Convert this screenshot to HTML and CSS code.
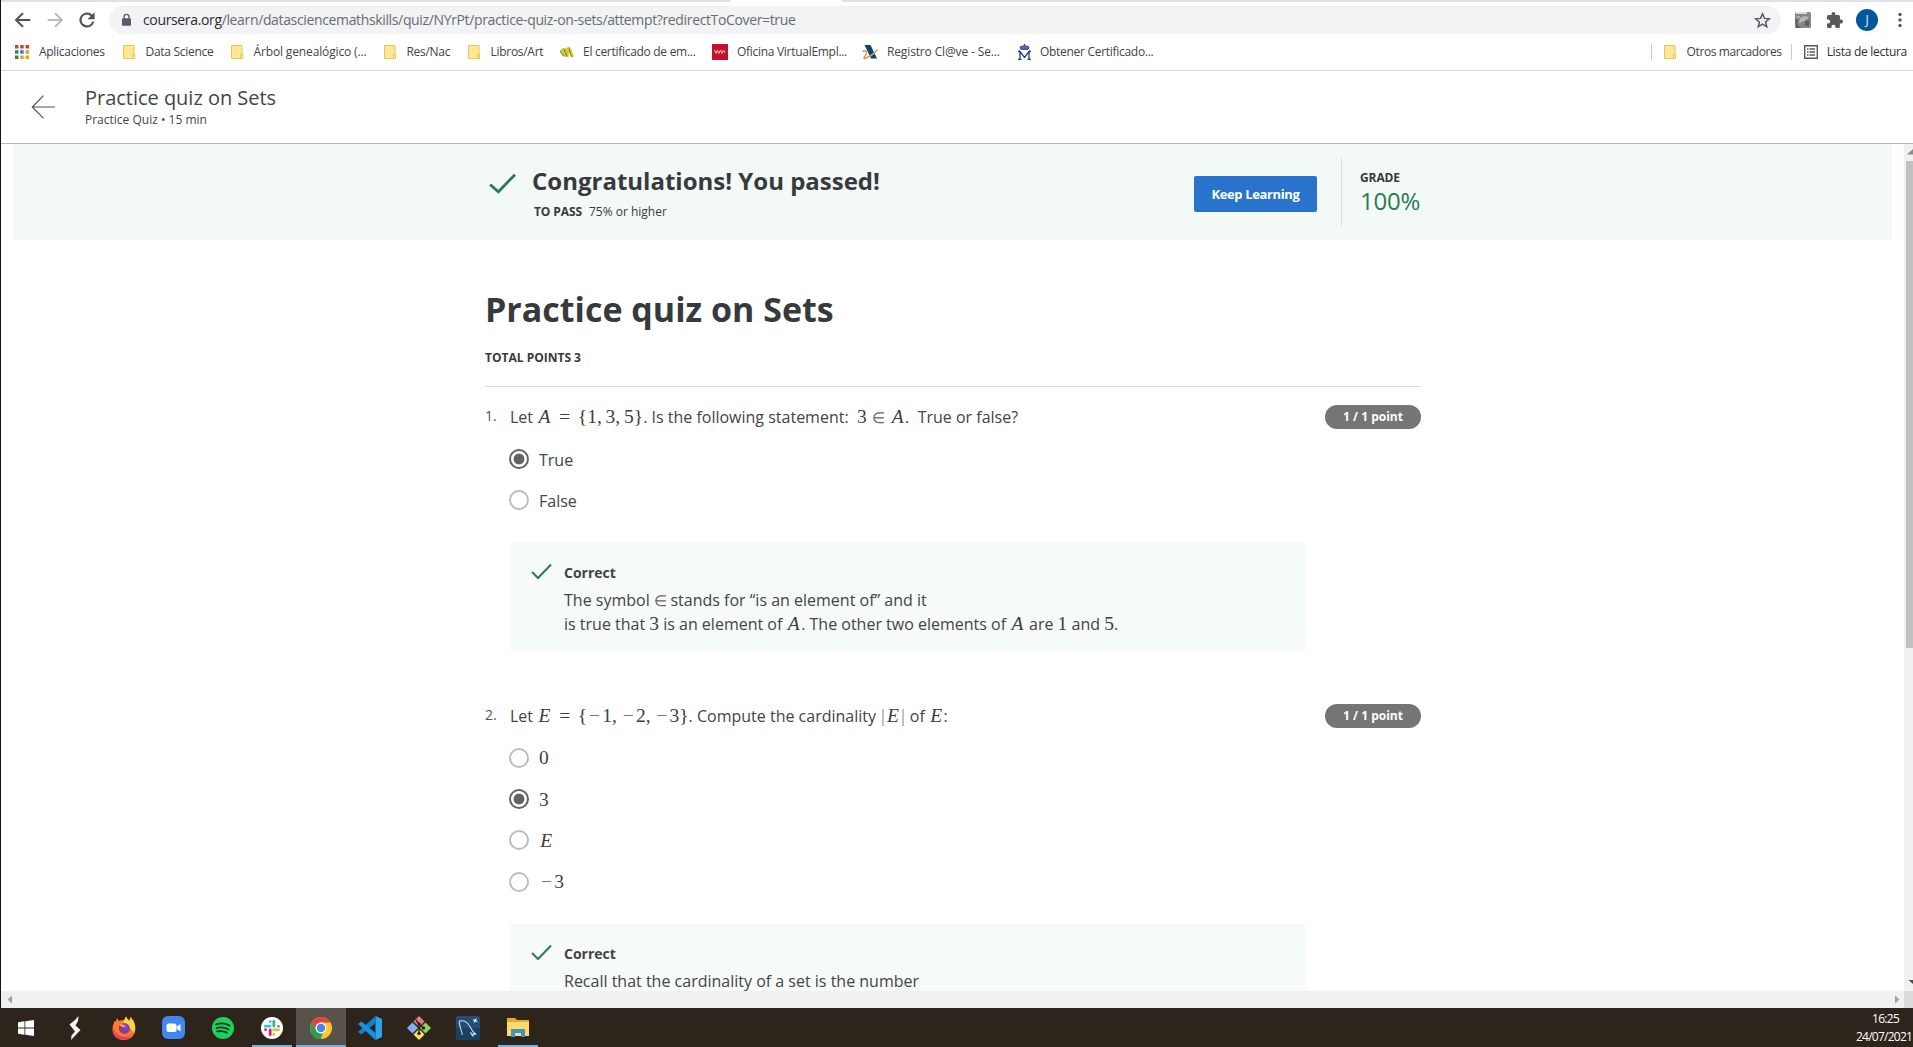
FILE: index.html
```html
<!DOCTYPE html>
<html lang="es">
<head>
<meta charset="utf-8">
<title>Practice quiz on Sets</title>
<link rel="stylesheet" href="styles.css">
</head>
<body>
<div class="screen">
<div class="browser">
  <div class="tabstrip"><span class="tab-active"></span></div>

  <div class="toolbar">
    <svg class="nav" viewBox="0 0 24 24"><path d="M20 12H5M12 4.500L4.500 12l7.500 7.500" fill="none" stroke="#4d5054" stroke-width="2.300"/></svg>
    <svg class="nav" viewBox="0 0 24 24"><path d="M4 12h15M12 4.500l7.500 7.500-7.500 7.500" fill="none" stroke="#b9bbbe" stroke-width="2.300"/></svg>
    <svg class="nav" viewBox="0 0 24 24"><path d="M17.650 6.350A8 8 0 1 0 19.730 14h-2.080A6 6 0 1 1 12 6c1.660 0 3.140.690 4.220 1.780L13 11h7V4z" fill="#4d5054" stroke="#4d5054" stroke-width=".5"/></svg>
    <div class="omnibox">
      <svg class="lock" viewBox="0 0 10 14"><rect x="0" y="5" width="10" height="8.500" rx="1" fill="#5a5d61"/><path d="M2.300 5.500V3.500a2.700 2.700 0 0 1 5.400 0v2" fill="none" stroke="#5a5d61" stroke-width="1.500"/></svg>
      <span class="url"><b class="host">coursera.org</b>/learn/datasciencemathskills/quiz/NYrPt/practice-quiz-on-sets/attempt?redirectToCover=true</span>
      <svg class="star" viewBox="0 0 16 16"><path d="M8 1.700l1.800 4.300 4.700.400-3.600 3 1.100 4.500-4-2.400-4 2.400 1.100-4.500-3.600-3 4.700-.400z" fill="none" stroke="#55585c" stroke-width="1.400"/></svg>
    </div>
    <svg class="ext" viewBox="0 0 16 16"><rect width="16" height="16" rx="1.500" fill="#85878a"/><path d="M1 0h11v2H1z" fill="#d9dadb"/><path d="M1 4h4v2H1zM2 10h4v1H2z" fill="#aaa"/><path d="M5 6l4-2 5 1-3 3-1 5-2-4-4 2z" fill="#b7b8ba"/><path d="M0 6l4 3-2 3 4 4H1zM9 9l5-1v6h-4z" fill="#606164"/></svg>
    <svg class="puzzle" viewBox="2 1 21 21"><path d="M20.500 11H19V7a2 2 0 0 0-2-2h-4V3.500a2.500 2.500 0 0 0-5 0V5H4a2 2 0 0 0-2 2v3.800h1.500a2.700 2.700 0 0 1 0 5.400H2V20a2 2 0 0 0 2 2h3.800v-1.500a2.700 2.700 0 0 1 5.400 0V22H17a2 2 0 0 0 2-2v-4h1.500a2.500 2.500 0 0 0 0-5z" fill="#56595d"/></svg>
    <span class="avatar">J</span>
    <svg class="dots" viewBox="0 0 4 16"><circle cx="2" cy="2.500" r="1.700"/><circle cx="2" cy="8" r="1.700"/><circle cx="2" cy="13.500" r="1.700"/></svg>
  </div>

  <div class="bookmarks">
    <div class="bm first"><svg class="i14" viewBox="0 0 14 14"><path d="M0 0h3.500v3.500H0zM5.200 0h3.500v3.500H5.200zM10.500 0H14v3.500h-3.500z" fill="#c8403a"/><path d="M0 5.200h3.500v3.500H0z" fill="#2d8a52"/><path d="M5.200 5.200h3.500v3.500H5.200z" fill="#3b72d0"/><path d="M10.500 5.200H14v3.500h-3.500zM5.200 10.500h3.500V14H5.200zM10.500 10.500H14V14h-3.500z" fill="#d9a62a"/><path d="M0 10.500h3.500V14H0z" fill="#2d8a52"/></svg><span>Aplicaciones</span></div>
    <div class="bm folder"><svg viewBox="0 0 12 14"><path d="M.5.500h10.500v13H.5z" fill="#ffe793" stroke="#e8c84f"/><path d="M9.500 9.500h2v4h-2z" fill="#fff0a8" stroke="#e3bd3c" stroke-width=".8"/></svg><span>Data Science</span></div>
    <div class="bm folder wide"><svg viewBox="0 0 12 14"><path d="M.5.500h10.500v13H.5z" fill="#ffe793" stroke="#e8c84f"/><path d="M9.500 9.500h2v4h-2z" fill="#fff0a8" stroke="#e3bd3c" stroke-width=".8"/></svg><span>Árbol genealógico (...</span></div>
    <div class="bm folder"><svg viewBox="0 0 12 14"><path d="M.5.500h10.500v13H.5z" fill="#ffe793" stroke="#e8c84f"/><path d="M9.500 9.500h2v4h-2z" fill="#fff0a8" stroke="#e3bd3c" stroke-width=".8"/></svg><span>Res/Nac</span></div>
    <div class="bm folder"><svg viewBox="0 0 12 14"><path d="M.5.500h10.500v13H.5z" fill="#ffe793" stroke="#e8c84f"/><path d="M9.500 9.500h2v4h-2z" fill="#fff0a8" stroke="#e3bd3c" stroke-width=".8"/></svg><span>Libros/Art</span></div>
    <div class="bm"><svg class="i14" viewBox="0 0 14 14"><path d="M0 5.500L3 3l3 .500L8.500 1.500l2 1L14 12l-2.500.500L9 7l-.500 5.500-3-1L2 9z" fill="#cfcb35"/><path d="M0 5.500l2 4 3 2M4 4l3 7.500M9 3.500l2.500 8.500" fill="none" stroke="#67692b" stroke-width=".8"/></svg><span>El certificado de em...</span></div>
    <div class="bm"><svg class="i16" viewBox="0 0 16 16"><path d="M0 0h16v16H0z" fill="#c3102c"/><path d="M2.500 6l1.500 3.500L5.500 6 7 9.500 8.500 6 10 9.500 11.500 6 13 9" fill="none" stroke="#f5b6bf" stroke-width="1"/></svg><span>Oficina VirtualEmpl...</span></div>
    <div class="bm wide"><svg class="i16" viewBox="0 0 16 16"><path d="M2.500 1h6L15 14.500H9z" fill="#0d4478"/><path d="M.5 7.500c4-2 5 1 3 4l-2 3M15.500 5.500c-2 3-3 4-6.500 6-3 1.500-4 2-6.500 3.500" fill="none" stroke="#d99e55" stroke-width="1.500"/></svg><span>Registro Cl@ve - Se...</span></div>
    <div class="bm"><svg class="crown" viewBox="0 0 13 16"><path d="M6.500 0v2M5.500 1h2" stroke="#213c82"/><path d="M2 4C2 1.800 5 1.600 6.500 2.800 8 1.600 11 1.800 11 4L10 5.300H3z" fill="#5c70a8" stroke="#213c82"/><path d="M2 15V7.500l4.500 6 4.500-6V15M0 7.500h2.500M10.500 7.500H13M0 15.300h3.500M9.500 15.300H13" fill="none" stroke="#213c82" stroke-width="1.300"/></svg><span>Obtener Certificado...</span></div>
    <div class="bm-right">
      <i class="sep"></i>
      <div class="bm folder"><svg viewBox="0 0 12 14"><path d="M.5.500h10.500v13H.5z" fill="#ffe793" stroke="#e8c84f"/><path d="M9.500 9.500h2v4h-2z" fill="#fff0a8" stroke="#e3bd3c" stroke-width=".8"/></svg><span class="tight">Otros marcadores</span></div>
      <i class="sep"></i>
      <div class="bm reading"><svg class="i14" viewBox="0 0 14 14"><path d="M.7.700h12.600v12.600H.7z" fill="#fff" stroke="#55585c" stroke-width="1.400"/><path d="M3 4h1.500M3 7h1.500M3 10h1.500M5.500 4H11M5.500 7H11M5.500 10H11" stroke="#55585c" stroke-width="1.300"/></svg><span>Lista de lectura</span></div>
    </div>
  </div>

  <header class="page-head">
    <svg class="back" viewBox="0 0 24 24"><path d="M23.500 12H.8M12 .700L.8 12 12 23.300" fill="none" stroke="#525252" stroke-width="1.200"/></svg>
    <div>
      <div class="head-title">Practice quiz on Sets</div>
      <div class="head-sub">Practice Quiz • 15 min</div>
    </div>
  </header>

  <div class="viewport">
    <main class="page">
      <section class="banner">
        <div class="column banner-row">
          <svg class="tick-lg" viewBox="0 0 26 20"><path d="M1 11l8 7L25 1.500" fill="none" stroke="#2a7b58" stroke-width="2.700"/></svg>
          <div class="passed">
            <h2>Congratulations! You passed!</h2>
            <p><b>TO PASS</b>75% or higher</p>
          </div>
          <button class="keep">Keep Learning</button>
          <div class="grade"><b>GRADE</b><span>100%</span></div>
        </div>
      </section>

      <div class="column body">
        <h1>Practice quiz on Sets</h1>
        <div class="total">TOTAL POINTS 3</div>

        <section class="question">
          <span class="num">1.</span>
          <div class="q">
            <div class="prompt">Let <span class="math"><i class="va">A</i><s>=</s>{1<u>,</u>3<u>,</u>5}</span>. Is the following statement: &nbsp;<span class="math">3<s class="in">∈</s><i class="va">A</i></span>. &nbsp;True or false?</div>
            <div class="options">
              <label><span class="radio on"></span>True</label>
              <label><span class="radio"></span>False</label>
            </div>
            <div class="feedback">
              <svg class="tick" viewBox="0 0 21 16"><path d="M1 8.500l6 6L20 1" fill="none" stroke="#2a7b58" stroke-width="2"/></svg>
              <div>
                <h3>Correct</h3>
                <p>The symbol <span class="math in-only">∈</span> stands for “is an element of” and it<br>is true that <span class="math">3</span> is an element of <span class="math"><i class="va">A</i></span>. The other two elements of <span class="math"><i class="va">A</i></span> are <span class="math">1</span> and <span class="math">5</span>.</p>
              </div>
            </div>
          </div>
          <span class="pill">1 / 1 point</span>
        </section>

        <section class="question">
          <span class="num">2.</span>
          <div class="q">
            <div class="prompt">Let <span class="math"><i class="va">E</i><s>=</s>{<em>−</em>1<u>,</u><em>−</em>2<u>,</u><em>−</em>3}</span>. Compute the cardinality <span class="math"><q>|</q><i class="va">E</i><q>|</q></span> of <span class="math"><i class="va">E</i></span>:</div>
            <div class="options">
              <label><span class="radio"></span><span class="math">0</span></label>
              <label><span class="radio on"></span><span class="math">3</span></label>
              <label><span class="radio"></span><span class="math"><i class="va">E</i></span></label>
              <label><span class="radio"></span><span class="math"><em>−</em>3</span></label>
            </div>
            <div class="feedback">
              <svg class="tick" viewBox="0 0 21 16"><path d="M1 8.500l6 6L20 1" fill="none" stroke="#2a7b58" stroke-width="2"/></svg>
              <div>
                <h3>Correct</h3>
                <p>Recall that the cardinality of a set is the number</p>
              </div>
            </div>
          </div>
          <span class="pill">1 / 1 point</span>
        </section>
      </div>
    </main>
    <div class="vscroll">
      <svg viewBox="0 0 9 17"><path d="M3 10.500L9 5v5.500z" fill="#8d8d8d"/></svg>
      <i class="thumb"></i>
      <svg viewBox="0 0 9 17"><path d="M4.500 6H9v4z" fill="#4a4a4a"/></svg>
    </div>
  </div>
  <div class="hscroll">
    <svg viewBox="0 0 10 17"><path d="M1.500 8.500L6 4.500v8z" fill="#a0a0a0"/></svg>
    <svg viewBox="0 0 10 17"><path d="M5.500 8.500L1 4.500v8z" fill="#a0a0a0"/></svg>
    <i class="corner"></i>
  </div>
</div>

<footer class="taskbar">
  <div class="apps">
    <div class="app"><svg width="16" height="16" viewBox="0 0 16 16"><path d="M0 2.200l6.500-.9v6.200H0zM7.300 1.200L16 0v7.500H7.300zM0 8.400h6.500v6.300L0 13.800zM7.300 8.400H16V16l-8.700-1.200z" fill="#fff"/></svg></div>
    <div class="app"><svg width="12" height="24" viewBox="0 0 12 24"><path d="M9.500 0L9 5 6.500 9.500l5 4.500L2 24l.5-4.500L6 15.500.5 8.500 6 4z" fill="#f4f4f4"/></svg></div>
    <div class="app"><svg width="24" height="24" viewBox="0 0 24 24"><path d="M5 2l2 3c2-1 4-1 5-1l2-3.500 2 3 1.500.500L18.500 1l3 4c3 6 2.500 12-1.500 16-5 4-12 4-16.500 0C-.5 17 0 11 2 7V5l1.500 1z" fill="#fc7a2c"/><path d="M14 .5l2 3.500 2 1 .500-4 3 4c2 4 2.300 8 .5 12l-6-7-5-3z" fill="#fed33f"/><path d="M1 11c1 7 7 10 12 10 4 0 7-2 8-5-2 6-7 7.500-10 7.500C5 23.500 0 18 1 11z" fill="#ef3662"/><circle cx="12.500" cy="12.500" r="5.400" fill="#7547c0"/><path d="M7 9l4 .500 3 .500c-1 2-3 1.500-3 3 0 2 4 3 6 1-2 4-8 4-10 0z" fill="#a02f8c"/><path d="M7 9l2-1 5 2-2.500 1.500z" fill="#ffb13b"/></svg></div>
    <div class="app"><svg width="23" height="23" viewBox="0 0 23 23"><rect width="23" height="23" rx="6" fill="#4187f2"/><rect x="4.500" y="7.500" width="10" height="8.500" rx="2" fill="#fff"/><path d="M15 10.500l3.500-2.500v7.500L15 13z" fill="#fff"/></svg></div>
    <div class="app"><svg width="22" height="22" viewBox="0 0 22 22"><circle cx="11" cy="11" r="11" fill="#1ed15f"/><path d="M4 7.300c4.500-1.300 9.500-1 13.500 1.200M4.600 11c4-1 8-.700 11.800 1.300M5.200 14.400c3.500-.700 6.500-.500 9.700 1.200" fill="none" stroke="#12351f" stroke-width="1.800" stroke-linecap="round"/></svg></div>
    <div class="app run"><svg width="22" height="22" viewBox="0 0 22 22"><circle cx="11" cy="11" r="11" fill="#fff"/><g fill="none" stroke-width="2.700" stroke-linecap="round"><path d="M4.300 9.200h4.800M9.300 4.500v.1" stroke="#36c5f0"/><path d="M12.800 4.300v4.800M17.500 9.300h-.1" stroke="#2eb67d"/><path d="M17.600 12.800h-4.800M12.700 17.500v-.1" stroke="#ecb22e"/><path d="M9.200 17.700v-4.900M4.500 12.700h.1" stroke="#e01e5a"/></g></svg></div>
    <div class="app run active"><svg width="22" height="22" viewBox="0 0 22 22"><circle cx="11" cy="11" r="11" fill="#fbc72f"/><path d="M1.470 5.500A11 11 0 0 1 20.530 5.500H11a5.500 5.500 0 0 0-4.760 8.250z" fill="#e0443a"/><path d="M1.470 5.500l4.770 8.250A5.500 5.500 0 0 0 12.700 16.200L10.800 22A11 11 0 0 1 1.470 5.500z" fill="#2b9d55"/><circle cx="11" cy="11" r="5.400" fill="#fff"/><circle cx="11" cy="11" r="4.200" fill="#4286ee"/></svg></div>
    <div class="app"><svg width="24" height="24" viewBox="0 0 24 24"><path d="M17.500 0L24 3v18l-6.500 3z" fill="#2ba4ee"/><path d="M17.500 0v7L3.500 18.500 0 16z" fill="#1180cd"/><path d="M17.500 24v-7L3.500 5.500 0 8z" fill="#1a92dc"/></svg></div>
    <div class="app"><svg width="24" height="24" viewBox="0 0 24 24"><path d="M12 0l5.500 5.500L12 11 6.500 5.500z" fill="#ee7b7b"/><path d="M5.500 6.500L11 12l-5.500 5.500L0 12z" fill="#84aef0"/><path d="M18.500 6.500L24 12l-5.500 5.500L13 12z" fill="#8ed163"/><path d="M12 13l5.500 5.500L12 24l-5.500-5.500z" fill="#fbe066"/><path d="M9 4l3 4v10M12 8l4 4" fill="none" stroke="#2e2a22" stroke-width="1.500"/><circle cx="12" cy="8" r="1.700" fill="#2e2a22"/><circle cx="16.500" cy="12" r="1.700" fill="#2e2a22"/><circle cx="12" cy="17.500" r="1.700" fill="#2e2a22"/></svg></div>
    <div class="app"><svg width="24" height="24" viewBox="0 0 24 24"><rect width="24" height="24" rx="2" fill="#244f75"/><path d="M0 12h24v10a2 2 0 0 1-2 2H2a2 2 0 0 1-2-2z" fill="#1c4062"/><path d="M6 19c.5-3-1-4-1.500-7C4 9 2.500 7 3.500 5c4-1 7.500 1 9.500 4 2 2.500 2 6 7 9.500l-3-.500v2c-1.500-1-2-2.500-2.500-4" fill="none" stroke="#c8dbea" stroke-width="1.100"/><path d="M16.500 3l2 .8L20.500 2l-.2 2.500 1.700 1.700-2.500-.6-1.800 1.400.3-2z" fill="#e8f0f6"/></svg></div>
    <div class="app run"><svg width="22" height="19" viewBox="0 0 22 19"><path d="M0 0h8l2 2h12v16H0z" fill="#e5ad2c"/><path d="M0 4h22v14H0z" fill="#ffd968"/><path d="M4 19v-8h14v8h-4v-4H8v4z" fill="#3f93c6"/></svg></div>
  </div>
  <div class="clock"><span>16:25</span><span class="date">24/07/2021</span></div>
</footer>
</div>
</body>
</html>
```
FILE: styles.css
```css
* { box-sizing: border-box; }
body { margin: 0; overflow: hidden; font-family: "Open Sans", sans-serif; color: #373a3c; background: #fff; }
h1, h2, h3, p { margin: 0; }
svg { display: block; flex: none; }
.screen { width: 1913px; height: 1047px; display: flex; flex-direction: column; overflow: hidden; }
.browser { flex: 1; min-height: 0; display: flex; flex-direction: column; border-left: 1px solid #17130f; }

/* browser chrome */
.tabstrip { height: 2px; background: #dee1e6; padding-left: 729px; }
.tab-active { display: block; width: 112px; height: 2px; background: #fff; }
.toolbar { height: 36px; display: flex; align-items: center; padding-left: 11px; }
.nav { width: 22px; height: 22px; margin-right: 10px; }
.omnibox { width: 1672px; height: 28px; margin-left: 1px; border-radius: 14px; background: #f1f3f4; display: flex; align-items: center; padding: 0 10px 0 13px; }
.lock { width: 9px; height: 14px; margin-right: 12px; }
.url { flex: 1; font-size: 14px; line-height: 28px; letter-spacing: -0.355px; color: #696c70; white-space: nowrap; }
.host { font-weight: 400; color: #2c2e31; }
.star { width: 17px; height: 17px; }
.ext { width: 16px; height: 16px; margin-left: 14px; }
.puzzle { width: 16px; height: 16px; margin-left: 16px; }
.avatar { width: 22px; height: 22px; margin-left: 13px; border-radius: 50%; background: #01579b; color: #e8f1f8; font-size: 12px; line-height: 22px; text-align: center; }
.dots { width: 4px; height: 16px; margin-left: 20px; fill: #55585c; }

.bookmarks { height: 33px; border-bottom: 1px solid #d5d7da; display: grid; grid-template-columns: 108px 108px 153px 84px 92px 152px 150px 156px 1fr auto; padding: 0 6px 4px 14px; align-items: center; }
.bm { display: flex; align-items: center; font-size: 12px; line-height: 20px; letter-spacing: -0.29px; white-space: nowrap; color: #414347; }
.bm.wide { letter-spacing: -0.14px; }
.bm svg { margin-right: 9px; }
.bm.first svg { margin-right: 10px; }
.bm .tight { letter-spacing: -0.41px; }
.folder svg { width: 12px; height: 14px; margin-right: 10.500px; }
.i14 { width: 14px; height: 14px; }
.i16 { width: 16px; height: 16px; }
.crown { width: 13px; height: 16px; }
.bm-right { display: flex; align-items: center; }
.sep { width: 1px; height: 16px; background: #cacccf; margin-right: 12px; }
.bm + .sep { margin-left: 9px; }
.reading { color: #2b2d30; }

/* quiz header */
.page-head { height: 73px; border-bottom: 1px solid #b8b8b8; display: flex; align-items: center; padding: 0 0 0 30px; }
.back { width: 25px; height: 24px; margin-right: 29px; }
.head-title { font-size: 20px; line-height: 26px; color: #454545; letter-spacing: -0.02px; }
.head-sub { font-size: 12px; line-height: 18px; color: #454545; }

.viewport { flex: 1; min-height: 0; display: flex; overflow: hidden; }
.page { flex: 1; overflow: hidden; padding: 0 12px; }
.column { width: 936px; margin-left: 472px; }
.banner { height: 96px; background: #f3f9f7; }
.banner-row { display: flex; }
.tick-lg { width: 27px; height: 21px; margin: 29px 16px 0 4px; }
.passed { flex: 1; }
.passed h2 { font-size: 24px; line-height: 32px; margin-top: 21px; letter-spacing: 0; }
.passed p { font-size: 12px; line-height: 18px; margin: 6px 0 0 2px; }
.passed b { margin-right: 7px; letter-spacing: -0.1px; }
.keep { width: 123px; height: 36px; margin: 32px 24px 0 0; padding: 0; border: 0; border-radius: 2px; background: #2a73cc; color: #fff; font: bold 13px/36px "Open Sans", sans-serif; letter-spacing: -0.36px; }
.grade { height: 68px; width: 80px; margin-top: 14px; padding: 11px 0 0 18px; border-left: 1px solid #d8dedc; }
.grade b { display: block; font-size: 12px; line-height: 18px; letter-spacing: -0.1px; }
.grade span { display: block; font-size: 24px; line-height: 27px; color: #2a7b50; letter-spacing: -0.2px; }

.body { padding-top: 46px; }
h1 { font-size: 34px; line-height: 46px; letter-spacing: 0; color: #373a3c; }
.total { font-size: 12px; font-weight: bold; line-height: 18px; margin-top: 17px; padding-bottom: 19px; border-bottom: 1px solid #dcdcdc; }
.question { display: grid; grid-template-columns: 25px 815px 96px; margin-bottom: 52px; }
.total + .question { margin-top: 17px; }
.num { font-size: 14px; line-height: 24px; color: #525252; }
.q { font-size: 16px; color: #424446; }
.prompt { line-height: 26px; white-space: pre; }
.pill { height: 24px; margin-top: 1px; border-radius: 12px; background: #757575; color: #fff; font-size: 12px; font-weight: bold; line-height: 24px; text-align: center; }
.options { display: grid; grid-auto-rows: 41.300px; margin: 9px 0 0 -1px; }
.options label { display: flex; align-items: center; gap: 10px; line-height: 26px; }
.radio { width: 20px; height: 20px; margin-top: -1px; border: 2px solid #bdbdbd; border-radius: 50%; background: #fff; }
.radio.on { border-color: #636363; background: radial-gradient(circle, #636363 5px, #fff 5.800px); }
.feedback { width: 795px; margin-top: 21px; padding: 17px 0 15px 21px; background: #f6fbf9; display: flex; }
.tick { width: 21px; height: 17px; margin: 3px 12px 0 0; }
.feedback h3 { font-size: 14px; line-height: 26px; }
.feedback p { line-height: 24px; margin-top: 2px; white-space: nowrap; }

/* formulas: boxes follow TeX advance widths */
.math { font-family: "Liberation Serif", serif; font-size: 19.500px; line-height: 0; white-space: nowrap; color: #3c3e40; }
.math i, .math s, .math em, .math u, .math q { display: inline-block; line-height: 0; text-decoration: none; text-align: center; font-style: normal; quotes: none; }
.math q::before, .math q::after { content: none; }
.math .va { width: .75em; font-style: italic; }
.math s { width: .778em; margin: 0 .278em; }
.math s.in { font-size: 15px; width: 13px; margin: 0 5.400px; color: #666; }
.math em { width: .778em; color: #777; }
.math u { width: .445em; text-align: left; }
.math q { width: .278em; color: #888; }
.math.in-only { display: inline-block; width: 12.500px; font-size: 15px; text-align: center; color: #666; }

/* scrollbars */
.vscroll { width: 9px; background: #f0f0f0; display: flex; flex-direction: column; }
.vscroll svg { width: 9px; height: 17px; }
.thumb { height: 487px; margin: 0 0 auto 2px; background: #c1c1c1; }
.hscroll { height: 17px; background: #f0f0f0; display: flex; padding-left: 5px; }
.hscroll svg { width: 10px; height: 17px; margin-right: auto; }
.hscroll svg + svg { margin-right: 0; }
.corner { width: 9px; background: #dcdcdc; }

/* taskbar */
.taskbar { height: 39px; background: #2d251c; display: flex; justify-content: space-between; }
.apps { display: grid; grid-template-columns: repeat(11, 49.200px); padding-left: 1.200px; }
.app { display: flex; align-items: center; justify-content: center; }
.run { background: linear-gradient(#76b3e2, #76b3e2) center bottom / 40px 2px no-repeat; }
.run.active { background: linear-gradient(#76b3e2, #76b3e2) center bottom / 100% 2px no-repeat #58524a; }
.clock { width: 57px; display: flex; flex-direction: column; color: #fff; font-size: 12px; line-height: 18px; padding-top: 2px; white-space: nowrap; letter-spacing: -0.7px; }
.clock span:first-child { padding-left: 16px; }
.date { letter-spacing: -0.75px; }
```
